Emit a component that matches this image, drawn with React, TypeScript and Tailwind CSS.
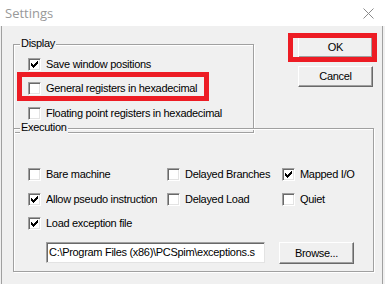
import React from 'react';

const CheckMark = () => (
  <svg width="7" height="7" viewBox="0 0 7 7" shapeRendering="crispEdges">
    <path
      d="M6 0h1v1h-1z M5 1h2v1h-2z M0 2h1v1h-1z M4 2h3v1h-3z M0 3h2v1h-2z M3 3h3v1h-3z M0 4h5v1h-5z M1 5h3v1h-3z M2 6h1v1h-1z"
      fill="#000"
    />
  </svg>
);

const CheckBox: React.FC<{ checked?: boolean }> = ({ checked }) => (
  <span className="flex items-center justify-center w-[13px] h-[13px] shrink-0 bg-white border border-t-[#a0a0a0] border-l-[#a0a0a0] border-r-white border-b-white shadow-[inset_1px_1px_0_#696969,inset_-1px_-1px_0_#e3e3e3]">
    {checked && <CheckMark />}
  </span>
);

interface OptionProps {
  label: string;
  checked?: boolean;
  clip?: boolean;
}

const Option: React.FC<OptionProps> = ({ label, checked, clip }) => (
  <div className="flex items-center h-[13px] gap-[5px]">
    <CheckBox checked={checked} />
    <span className={clip ? 'w-[111px] overflow-hidden whitespace-nowrap' : 'whitespace-nowrap'}>{label}</span>
  </div>
);

const Button: React.FC<{ label: string; className?: string }> = ({ label, className }) => (
  <button
    className={`flex items-center justify-center bg-[#f0f0f0] border border-t-white border-l-white border-r-[#696969] border-b-[#696969] shadow-[inset_-1px_-1px_0_#a0a0a0] ${className ?? ''}`}
  >
    {label}
  </button>
);

export default function App() {
  return (
    <div className="relative w-[385px] h-[284px] overflow-hidden bg-[#f0f0f0] font-['Liberation_Sans',Arial,sans-serif] text-[11px] tracking-[-0.3px] leading-[13px] text-black">
      {/* title bar */}
      <div className="flex items-center justify-between h-[26px] bg-white pl-[5px] pr-[11px]">
        <span className="font-['Open_Sans',sans-serif] text-[13px] tracking-normal leading-[18px] text-[#999]">Settings</span>
        <svg width="11" height="11" viewBox="0 0 11 11">
          <path d="M0.5 0.5L10.5 10.5M10.5 0.5L0.5 10.5" stroke="#8a8a8a" strokeWidth="1" />
        </svg>
      </div>

      {/* client area */}
      <div className="ml-[1px] w-[382px] h-[258px] border-l border-r border-[#a0a0a0]">
        <div className="flex items-start">
          <div className="relative ml-[11px] mt-[18px] w-[241px] h-[89px] pt-[13px] pl-[14px] border border-[#a0a0a0] shadow-[inset_1px_1px_0_#fff,1px_1px_0_#fff]">
            <span className="absolute left-[6px] top-[-8px] px-[1px] bg-[#f0f0f0]">Display</span>
            <Option label="Save window positions" checked />
            <div className="mt-[11px]">
              <Option label="General registers in hexadecimal" />
            </div>
            <div className="mt-[12px]">
              <Option label="Floating point registers in hexadecimal" />
            </div>
          </div>

          <div className="flex flex-col gap-[8px] ml-[44px] mt-[11px]">
            <Button label="OK" className="w-[75px] h-[21px]" />
            <Button label="Cancel" className="w-[75px] h-[21px]" />
          </div>
        </div>

        <div className="relative ml-[11px] mt-[-5px] w-[361px] h-[144px] pt-[39px] pl-[14px] border border-[#a0a0a0] shadow-[inset_1px_1px_0_#fff,1px_1px_0_#fff]">
          <span className="absolute left-[6px] top-[-8px] px-[1px] bg-[#f0f0f0]">Execution</span>

          <div className="flex">
            <div className="w-[139px]">
              <Option label="Bare machine" />
            </div>
            <div className="w-[115px]">
              <Option label="Delayed Branches" />
            </div>
            <Option label="Mapped I/O" checked />
          </div>

          <div className="flex mt-[12px]">
            <div className="w-[139px]">
              <Option label="Allow pseudo instructions" checked clip />
            </div>
            <div className="w-[115px]">
              <Option label="Delayed Load" />
            </div>
            <Option label="Quiet" />
          </div>

          <div className="mt-[11px]">
            <Option label="Load exception file" checked />
          </div>

          <div className="flex items-start mt-[12px] pl-[18px]">
            <div className="flex items-center w-[219px] h-[21px] pl-[2px] bg-white overflow-hidden whitespace-nowrap border border-t-[#a0a0a0] border-l-[#a0a0a0] border-r-[#e3e3e3] border-b-[#e3e3e3] shadow-[inset_1px_1px_0_#696969]">
              C:\Program Files (x86)\PCSpim\exceptions.s
            </div>
            <Button label="Browse..." className="ml-[14px] w-[75px] h-[22px]" />
          </div>
        </div>
      </div>

      {/* annotation highlights */}
      <div className="absolute left-[17px] top-[72px] w-[192px] h-[29px] border-[5px] border-[#ed1c24]" />
      <div className="absolute left-[288px] top-[33px] w-[89px] h-[29px] border-[5px] border-[#ed1c24]" />
    </div>
  );
}
